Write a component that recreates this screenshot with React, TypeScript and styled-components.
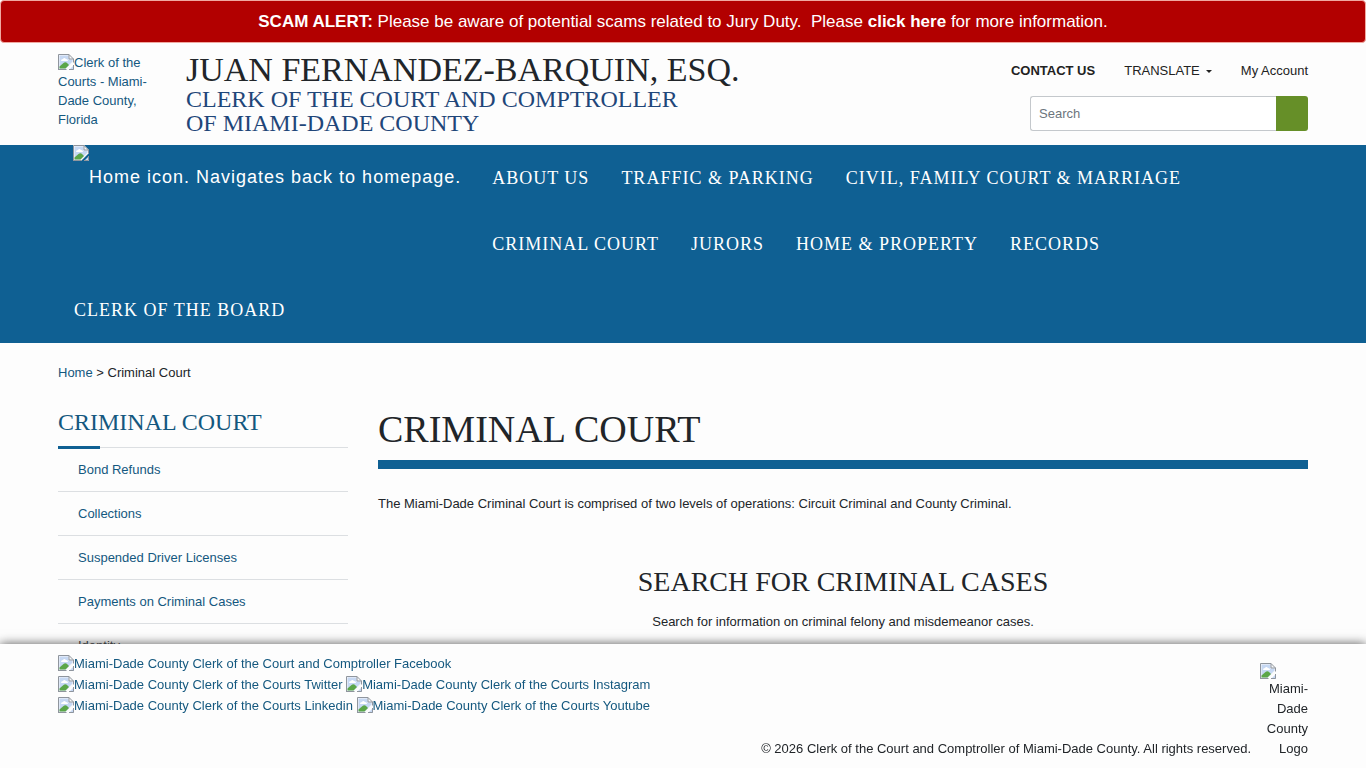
import React from "react";
import styled, { createGlobalStyle } from "styled-components";

const blue = "#0f6093";
const linkBlue = "#14587f";
const ink = "#212529";
const serif = '"Liberation Serif", "Times New Roman", serif';
const sans = '"Liberation Sans", Arial, sans-serif';

const GlobalStyle = createGlobalStyle`
  *, *::before, *::after { box-sizing: border-box; }
  body {
    margin: 0;
    background: #fdfdfd;
    color: ${ink};
    font-family: ${sans};
    font-size: 13px;
    line-height: 20px;
    overflow: hidden;
  }
  h1, h2, h3, p, ul { margin: 0; padding: 0; }
  h1, h2, h3 { font-family: ${serif}; font-weight: 400; text-transform: uppercase; }
  ul { list-style: none; }
  a { color: ${linkBlue}; text-decoration: none; }
`;

const Container = styled.div`
  max-width: 1280px;
  margin: 0 auto;
  padding: 0 15px;
`;

const Alert = styled.div`
  border: 1px solid #f0a8a0;
  border-radius: 4px;
  padding: 8px 16px;
  background: #b20000;
  color: #fff;
  font-size: 17px;
  line-height: 25px;
  text-align: center;
  a { color: inherit; font-weight: 700; }
`;

const HeaderBar = styled(Container)`
  display: flex;
  align-items: flex-start;
  padding-top: 10px;
  padding-bottom: 10px;
`;

const LogoLink = styled.a`
  width: 98px;
  margin-right: 30px;
  line-height: 19px;
`;

const Titles = styled.div`
  flex: 1;
`;

const ClerkName = styled.h2`
  font-size: 34px;
  line-height: 34px;
`;

const Office = styled.h3`
  color: #1f4679;
  font-size: 24px;
  line-height: 24px;
`;

const HeaderTools = styled.div`
  display: flex;
  flex-direction: column;
  align-items: flex-end;
  gap: 15px;
  padding-top: 8px;
`;

const ToolLinks = styled.div`
  display: flex;
  gap: 29px;
  a { color: #222; }
`;

const TranslateButton = styled.button`
  display: flex;
  align-items: center;
  gap: 6px;
  border: 0;
  padding: 0;
  background: none;
  color: #222;
  font: inherit;
  &::after {
    content: "";
    border: 3px solid transparent;
    border-top-color: currentColor;
    border-bottom: 0;
  }
`;

const SearchForm = styled.form`
  display: flex;
  width: 278px;
`;

const SearchInput = styled.input`
  flex: 1;
  min-width: 0;
  height: 35px;
  border: 1px solid #c4c8cc;
  border-right: 0;
  border-radius: 3px 0 0 3px;
  padding: 0 8px;
  background: #fff;
  font: inherit;
  &::placeholder { color: #6c757d; opacity: 1; }
`;

const SearchButton = styled.button`
  width: 32px;
  border: 0;
  border-radius: 0 3px 3px 0;
  background: #668f28;
`;

const NavBar = styled.nav`
  background: ${blue};
`;

const NavList = styled.ul`
  display: flow-root;
`;

const NavItem = styled.li<{ $home?: boolean }>`
  float: left;
  height: ${(p) => (p.$home ? 132 : 66)}px;
  a {
    display: flex;
    padding: 0 ${(p) => (p.$home ? 15 : 16)}px;
    color: #fff;
    font-family: ${(p) => (p.$home ? sans : serif)};
    font-size: 18px;
    letter-spacing: 1px;
    line-height: 66px;
    text-transform: ${(p) => (p.$home ? "none" : "uppercase")};
  }
`;

const HomeLabel = styled.span`
  line-height: 64px;
`;

const Breadcrumb = styled.nav`
  padding: 20px 0 24px;
`;

const Columns = styled.div`
  display: grid;
  grid-template-columns: 290px 1fr;
  gap: 30px;
`;

const SideTitle = styled.h2`
  padding: 0 0 10px;
  color: ${linkBlue};
  font-size: 24px;
  line-height: 30px;
`;

const SideList = styled.ul`
  position: relative;
  &::before {
    content: "";
    position: absolute;
    top: -1px;
    left: 0;
    width: 42px;
    height: 3px;
    background: ${blue};
  }
`;

const SideItem = styled.li`
  border-top: 1px solid #dcdfe2;
  padding: 12px 20px 11px;
`;

const PageTitle = styled.h1`
  border-bottom: 9px solid ${blue};
  padding: 0 0 9px;
  font-size: 38px;
  line-height: 44px;
`;

const Intro = styled.p`
  padding: 25px 0 51px;
`;

const SearchCases = styled.section`
  text-align: center;
  h2 {
    padding-bottom: 13px;
    font-size: 28px;
    line-height: 34px;
  }
`;

const Footer = styled.footer`
  position: fixed;
  right: 0;
  bottom: 0;
  left: 0;
  background: #fdfdfd;
  box-shadow: 0 0 10px #555;
`;

const FooterInner = styled(Container)`
  display: flex;
  justify-content: space-between;
  padding-top: 9px;
  padding-bottom: 9px;
`;

const SocialList = styled.div`
  width: 600px;
  line-height: 21px;
  a { white-space: nowrap; }
`;

const FooterEnd = styled.div`
  display: flex;
  align-items: flex-end;
  gap: 9px;
  padding-top: 10px;
`;

const CountyLogo = styled.div`
  display: flex;
  flex-direction: column;
  width: 48px;
  text-align: right;
`;

const Icon = styled.svg`
  display: inline-block;
  flex: none;
  width: 16px;
  height: 16px;
  vertical-align: text-bottom;
`;

const MissingImage = () => (
  <Icon viewBox="0 0 16 16" aria-hidden="true">
    <path d="M0 0h11l5 5v3l-8 8H0z" fill="#f8f9fa" />
    <path d="M1.500 1.500h9v4h4v2L7.500 14.500h-6z" fill="#c6d8f3" />
    <path d="M3 7q0-2 2-2 1-2 3 0 2 0 2 2z" fill="#fff" />
    <path d="M1.500 14.500v-2l4-3.500q2-1.500 4 .5l1.500 1.500-3.500 3.500z" fill="#5ba648" />
    <path d="M16 11v5h-5z" fill="#c6d8f3" />
    <path d="M.5 16V.5H11L15.500 5v3.500M11 .5V5h4.500M0 15.500h8.500M11 15.500h4.500V11" fill="none" stroke="#8f959d" />
  </Icon>
);

const menu = [
  "About Us",
  "Traffic & Parking",
  "Civil, Family Court & Marriage",
  "Criminal Court",
  "Jurors",
  "Home & Property",
  "Records",
  "Clerk of the Board",
];

const sideLinks = [
  "Bond Refunds",
  "Collections",
  "Suspended Driver Licenses",
  "Payments on Criminal Cases",
];

const socials = [
  "Miami-Dade County Clerk of the Court and Comptroller Facebook",
  "Miami-Dade County Clerk of the Courts Twitter",
  "Miami-Dade County Clerk of the Courts Instagram",
  "Miami-Dade County Clerk of the Courts Linkedin",
  "Miami-Dade County Clerk of the Courts Youtube",
];

export default function App() {
  return (
    <>
      <GlobalStyle />
      <Alert role="alert">
        <strong>SCAM ALERT:</strong> Please be aware of potential scams related to Jury Duty.&nbsp; Please{" "}
        <a href="#scam">click here</a> for more information.
      </Alert>
      <header>
        <HeaderBar>
          <LogoLink href="#home">
            <MissingImage />
            Clerk of the Courts - Miami-Dade County, Florida
          </LogoLink>
          <Titles>
            <ClerkName>Juan Fernandez-Barquin, Esq.</ClerkName>
            <Office>
              Clerk of the Court and Comptroller
              <br />
              of Miami-Dade County
            </Office>
          </Titles>
          <HeaderTools>
            <ToolLinks>
              <a href="#contact"><strong>CONTACT US</strong></a>
              <TranslateButton type="button">TRANSLATE</TranslateButton>
              <a href="#account">My Account</a>
            </ToolLinks>
            <SearchForm role="search">
              <SearchInput type="text" placeholder="Search" aria-label="Search" />
              <SearchButton type="submit" aria-label="Submit search" />
            </SearchForm>
          </HeaderTools>
        </HeaderBar>
        <NavBar>
          <Container>
            <NavList>
              <NavItem $home>
                <a href="#home">
                  <MissingImage />
                  <HomeLabel>Home icon. Navigates back to homepage.</HomeLabel>
                </a>
              </NavItem>
              {menu.map((label) => (
                <NavItem key={label}>
                  <a href="#menu">{label}</a>
                </NavItem>
              ))}
            </NavList>
          </Container>
        </NavBar>
      </header>
      <Container>
        <Breadcrumb aria-label="Breadcrumb">
          <a href="#home">Home</a> &gt; Criminal Court
        </Breadcrumb>
        <Columns>
          <aside>
            <SideTitle>Criminal Court</SideTitle>
            <SideList>
              {sideLinks.map((label) => (
                <SideItem key={label}>
                  <a href="#section">{label}</a>
                </SideItem>
              ))}
              <SideItem>Identity</SideItem>
            </SideList>
          </aside>
          <main>
            <PageTitle>Criminal Court</PageTitle>
            <Intro>
              The Miami-Dade Criminal Court is comprised of two levels of operations: Circuit Criminal and County
              Criminal.
            </Intro>
            <SearchCases>
              <h2>Search for Criminal Cases</h2>
              <p>Search for information on criminal felony and misdemeanor cases.</p>
            </SearchCases>
          </main>
        </Columns>
      </Container>
      <Footer>
        <FooterInner>
          <SocialList>
            {socials.map((label) => (
              <React.Fragment key={label}>
                <a href="#social">
                  <MissingImage />
                  {label}
                </a>{" "}
              </React.Fragment>
            ))}
          </SocialList>
          <FooterEnd>
            <p>© 2026 Clerk of the Court and Comptroller of Miami-Dade County. All rights reserved.</p>
            <CountyLogo>
              <MissingImage />
              Miami-Dade County Logo
            </CountyLogo>
          </FooterEnd>
        </FooterInner>
      </Footer>
    </>
  );
}
